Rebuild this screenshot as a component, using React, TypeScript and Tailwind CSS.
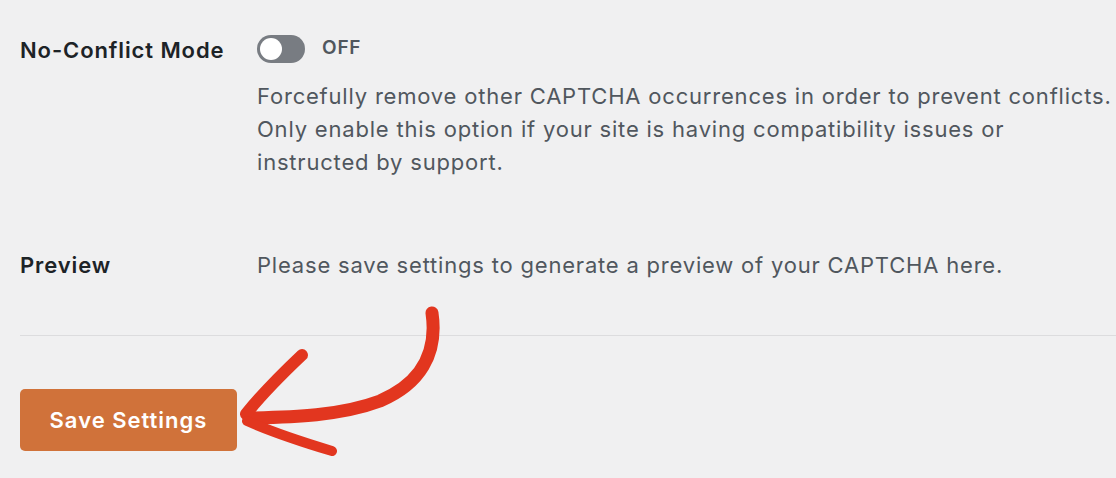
export default function App() {
  return (
    <div
      className="relative w-[1116px] h-[478px] overflow-hidden bg-[#f0f0f1] text-[#1d2327]"
      style={{ fontFamily: "Inter, 'Noto Sans', sans-serif" }}
    >
      <div className="pt-[34px]">
        {/* No-Conflict Mode */}
        <div className="flex pl-5">
          <div className="w-[237px] shrink-0 text-[22px] font-semibold leading-[33px] tracking-[0.9px]">
            No-Conflict Mode
          </div>
          <div>
            <div className="flex h-[29px] items-center gap-[17px]">
              <span className="flex h-[28px] w-[48px] items-center rounded-full bg-[#787c82] px-[3px]">
                <span className="h-[22px] w-[22px] rounded-full bg-white" />
              </span>
              <span className="text-[19px] font-semibold tracking-[0.8px] text-[#50575e]">OFF</span>
            </div>
            <p className="mt-[17px] whitespace-nowrap text-[22px] leading-[33px] tracking-[0.8px] text-[#50575e]">
              Forcefully remove other CAPTCHA occurrences in order to prevent conflicts.
              <br />
              Only enable this option if your site is having compatibility issues or
              <br />
              instructed by support.
            </p>
          </div>
        </div>

        {/* Preview */}
        <div className="mt-[70px] flex pl-5">
          <div className="w-[237px] shrink-0 text-[22px] font-semibold leading-[33px] tracking-[0.9px]">Preview</div>
          <p className="whitespace-nowrap text-[22px] leading-[33px] tracking-[0.8px] text-[#50575e]">
            Please save settings to generate a preview of your CAPTCHA here.
          </p>
        </div>

        <div className="ml-5 mt-[53px] h-px bg-[#dcdcde]" />

        <div className="mt-[53px] pl-5">
          <button className="h-[62px] w-[217px] rounded-[5px] bg-[#d0723a] text-[22px] font-semibold tracking-[1px] text-white">
            Save Settings
          </button>
        </div>
      </div>

      {/* hand-drawn arrow */}
      <svg
        className="pointer-events-none absolute left-0 top-0"
        width="1116"
        height="478"
        viewBox="0 0 1116 478"
        fill="none"
        stroke="#e2361f"
        strokeLinecap="round"
        strokeLinejoin="round"
      >
        <path d="M432 313 C 438 354, 420 384, 380 401 C 340 416, 292 417, 250 418" strokeWidth="13" />
        <path d="M302 355 C 284 372, 262 394, 246 414" strokeWidth="12" />
        <path d="M247 421 C 272 432, 302 442, 332 451" strokeWidth="10" />
      </svg>
    </div>
  );
}
